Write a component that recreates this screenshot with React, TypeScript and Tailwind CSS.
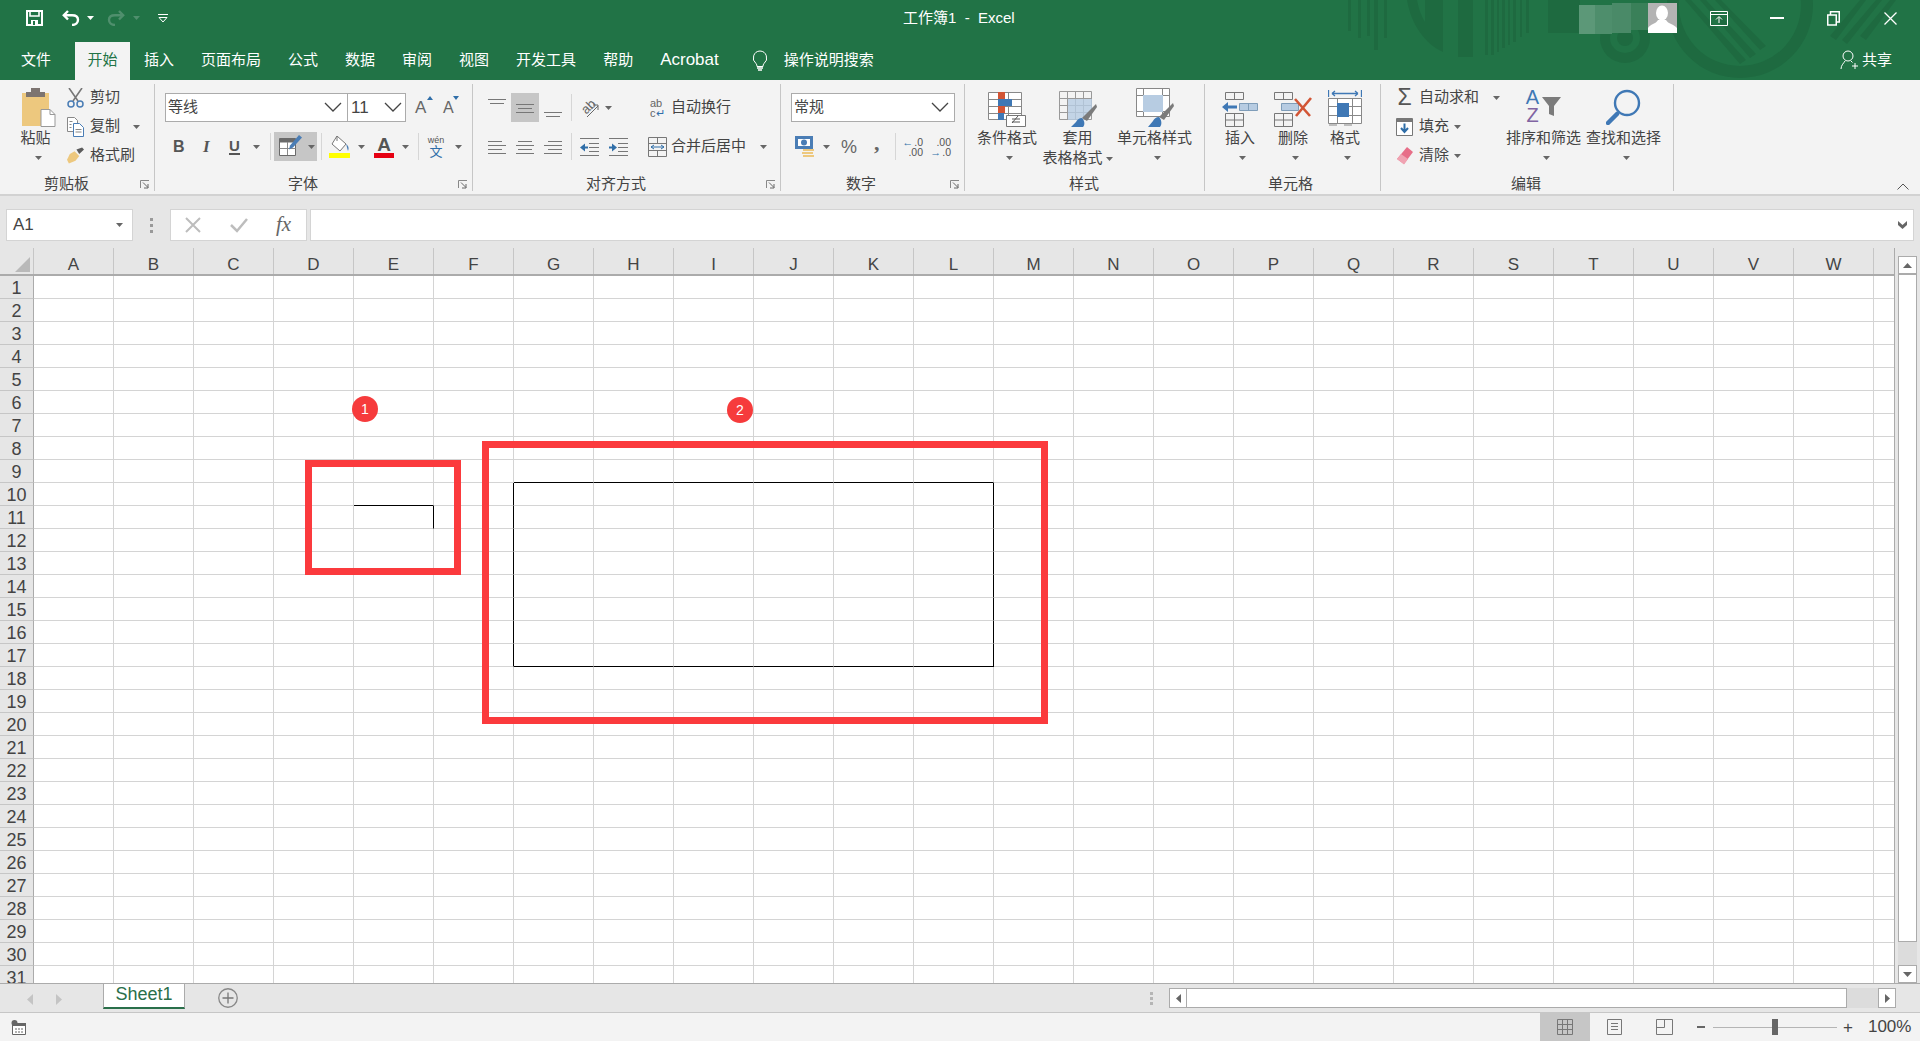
import type { ReactNode } from "react";

const columns = "ABCDEFGHIJKLMNOPQRSTUVW".split("");
const rows = Array.from({ length: 31 }, (_, i) => i + 1);

function Caret({ className = "" }: { className?: string }) {
  return (
    <svg width="7" height="4" viewBox="0 0 7 4" className={`shrink-0 ${className}`}>
      <path d="M0 0h7L3.5 4z" fill="#666" />
    </svg>
  );
}

function Chevron() {
  return (
    <svg width="18" height="11" viewBox="0 0 18 11" className="shrink-0">
      <path d="M1 1l8 8 8-8" fill="none" stroke="#444" strokeWidth="1.3" />
    </svg>
  );
}

function Launcher({ className = "" }: { className?: string }) {
  return (
    <svg width="10" height="9" viewBox="0 0 10 9" className={`shrink-0 ${className}`}>
      <path d="M.5 8V.5H9" fill="none" stroke="#888" />
      <path d="M3 2.5l5 5M8 4v4H4" fill="none" stroke="#666" />
    </svg>
  );
}

function Sep({ className = "" }: { className?: string }) {
  return <div className={`h-[27px] w-px shrink-0 bg-[#d6d6d6] ${className}`} />;
}

function Group({ className, label, labelClass, launcher, children }: {
  className: string;
  label: string;
  labelClass: string;
  launcher?: boolean;
  children: ReactNode;
}) {
  return (
    <div className={`mt-[4px] flex h-[107px] shrink-0 flex-col border-r border-[#c6c6c6] ${className}`}>
      <div className="h-[91px]">{children}</div>
      <div className="flex h-[16px] items-center pt-[2px] text-[15px] leading-[16px]">
        <span className={labelClass}>{label}</span>
        {launcher && <Launcher className="mr-[4px] ml-auto" />}
      </div>
    </div>
  );
}

function BigBtn({ className, icon, label, label2, noCaret }: {
  className: string;
  icon: ReactNode;
  label: string;
  label2?: string;
  noCaret?: boolean;
}) {
  return (
    <div className={`flex shrink-0 flex-col items-center ${className}`}>
      <div className="flex h-[43px] items-end">{icon}</div>
      <div className="mt-px h-[20px] text-[15px] leading-[20px] whitespace-nowrap">{label}</div>
      <div className="flex h-[20px] items-center justify-center text-[15px] leading-[20px] whitespace-nowrap">
        {label2 && <span>{label2}</span>}
        {!noCaret && <Caret className={label2 ? "mt-[2px] ml-[3px]" : "ml-[5px]"} />}
      </div>
    </div>
  );
}

function SmallRow({ icon, label, caretClass }: { icon: ReactNode; label: string; caretClass?: string }) {
  return (
    <div className="flex h-[29px] items-center text-[15px]">
      <div className="flex w-[17px] shrink-0 justify-center">{icon}</div>
      <span className="ml-[6px] whitespace-nowrap">{label}</span>
      {caretClass && <Caret className={caretClass} />}
    </div>
  );
}

function AlignIcon({ lines }: { lines: [number, number, number][] }) {
  return (
    <svg width="18" height="16" viewBox="0 0 18 16" className="shrink-0">
      {lines.map(([a, b, y]) => (
        <path key={y} d={`M${a} ${y}.5H${b}`} stroke="#777" />
      ))}
    </svg>
  );
}

function SaveIcon() {
  return (
    <svg width="17" height="16" viewBox="0 0 17 16">
      <path d="M1 1h15v14H1z" fill="none" stroke="#fff" strokeWidth="2" />
      <path d="M4 1v5h9V1" fill="none" stroke="#fff" strokeWidth="1.6" />
      <path d="M5 10h7v5H5z" fill="#fff" />
      <path d="M7 11h2v4H7z" fill="#217346" />
    </svg>
  );
}

function ArrowBack({ stroke, flip }: { stroke: string; flip?: boolean }) {
  return (
    <svg width="18" height="16" viewBox="0 0 18 16" className={flip ? "-scale-x-100" : ""}>
      <path d="M6 1L1.8 5.2 6 9.5" fill="none" stroke={stroke} strokeWidth="2.4" />
      <path d="M2 5.2h8c4 0 6 2 6 4.6S14 15 10 15" fill="none" stroke={stroke} strokeWidth="2.4" />
    </svg>
  );
}

function PasteIcon() {
  return (
    <svg width="35" height="39" viewBox="0 0 35 39">
      <path d="M1 5h27v33H1z" fill="#edc87e" />
      <path d="M5 4h5V0h9v4h5v5H5z" fill="#7c7470" />
      <path d="M20 21.5h9l5 5v12H20z" fill="#fff" stroke="#999" />
      <path d="M29 21.5v5h5" fill="none" stroke="#999" />
    </svg>
  );
}

function ScissorsIcon() {
  return (
    <svg width="17" height="20" viewBox="0 0 17 20">
      <path d="M2 0l9 13M15 0L6 13" stroke="#777" strokeWidth="1.6" fill="none" />
      <circle cx="4" cy="16" r="3" fill="none" stroke="#4a7db5" strokeWidth="1.5" />
      <circle cx="13" cy="16" r="3" fill="none" stroke="#4a7db5" strokeWidth="1.5" />
    </svg>
  );
}

function CopyIcon() {
  return (
    <svg width="17" height="20" viewBox="0 0 17 20">
      <path d="M.5.5h7l3 3v11H.5z" fill="#fff" stroke="#888" />
      <path d="M6.5 6.5h6l4 4v9h-10z" fill="#fff" stroke="#4a7db5" />
      <path d="M2.5 4.5h3M2.5 7.5h2M2.5 10.5h2M8.500 12.5h6M8.500 15h6" stroke="#888" />
    </svg>
  );
}

function BrushIcon() {
  return (
    <svg width="18" height="18" viewBox="0 0 18 18">
      <path d="M10 2l6-2 2 2-5 5z" fill="#5b5b5b" />
      <path d="M8 4l5 5-4 5-7 3-2-4 3-6z" fill="#edc87e" />
    </svg>
  );
}

function BorderIcon() {
  return (
    <svg width="23" height="24" viewBox="0 0 23 24">
      <path d="M.5 3.5h16v17H.5z" fill="#fff" stroke="#6a6a6a" />
      <path d="M.5 3.5h16v4H.5z" fill="#6a6a6a" />
      <path d="M.5 13.5h16M8.500 7v13" stroke="#888" />
      <path d="M20 0l3 2.500-9 10-4 2 1-4z" fill="#4a7db5" />
    </svg>
  );
}

function FillIcon() {
  return (
    <div className="flex flex-col items-center">
      <svg width="21" height="17" viewBox="0 0 21 17">
        <path d="M8 0l9 8-6 7-8-7z" fill="#fff" stroke="#777" />
        <path d="M8 0v5" stroke="#777" />
        <path d="M17 8c3 2 3 5 2 7-1-2-1-5-2-7z" fill="#4a7db5" />
      </svg>
      <div className="h-[5px] w-[21px] bg-[#ffff00]" />
    </div>
  );
}

function CurrencyIcon() {
  return (
    <svg width="20" height="22" viewBox="0 0 20 22">
      <path d="M0 0h18v13H0z" fill="#4a7db5" />
      <path d="M3 3h12v7H3z" fill="#fff" />
      <circle cx="9" cy="6.500" r="3" fill="#4a7db5" />
      <path d="M8 13h11v2H8zM7 16h11v2H7zM8 19h11v2H8z" fill="#edc87e" />
    </svg>
  );
}

function DecimalIcon({ up }: { up?: boolean }) {
  return (
    <div className="flex w-[17px] flex-col text-[10.5px] leading-[10px] text-[#555]">
      <div className="flex items-center justify-end">
        {up && <span className="mr-px text-[11px] text-[#2f6ea8]">←</span>}
        <span>{up ? ".0" : ".00"}</span>
      </div>
      <div className="flex items-center justify-end">
        {!up && <span className="mr-px text-[11px] text-[#2f6ea8]">→</span>}
        <span>{up ? ".00" : ".0"}</span>
      </div>
    </div>
  );
}

function IndentIcon({ dir }: { dir: "in" | "out" }) {
  return (
    <svg width="19" height="18" viewBox="0 0 19 18">
      <path d="M0 .5h19M9 5.500h10M9 9.500h10M9 13.500h10M0 17.500h19" stroke="#777" />
      <path d={dir === "out" ? "M0 9.500l5-4v3h3v2H5v3z" : "M8 9.500l-5-4v3H0v2h3v3z"} fill="#2f6ea8" />
    </svg>
  );
}

function MergeIcon() {
  return (
    <svg width="19" height="20" viewBox="0 0 19 20">
      <path d="M.5.5h18v19H.5zM.5 6.500h18M.5 13.500h18M9.500.5v6M9.500 13.500v6" fill="none" stroke="#777" />
      <path d="M3 10h13M3 10l3-2M3 10l3 2M16 10l-3-2M16 10l-3 2" stroke="#2f6ea8" fill="none" />
    </svg>
  );
}

function CondFormatIcon() {
  return (
    <svg width="38" height="35" viewBox="0 0 38 35">
      <path d="M.5.5h33v27H.5zM.5 7.500h33M.5 14.500h33M.5 21.500h33M10.500.5v27M20.500.5v27" fill="#fff" stroke="#888" />
      <path d="M10 0h7v7h-7zM10 14h7v7h-7z" fill="#d25535" />
      <path d="M10 7h14v7H10zM10 21h6v7h-6z" fill="#3f78b5" />
      <path d="M18.500 23.500h19v11h-19z" fill="#fff" stroke="#777" />
      <path d="M24 31l6-7M24 27h8M24 30h8" stroke="#555" fill="none" />
    </svg>
  );
}

function TableFormatIcon() {
  return (
    <svg width="38" height="36" viewBox="0 0 38 36">
      <path d="M.5.5h32v28H.5zM.5 7.500h32M.5 14.500h32M.5 21.500h32M8.500.5v28M16.500.5v28M24.500.5v28" fill="none" stroke="#999" />
      <path d="M9 8h24v15l-8 6H9z" fill="#b7cce2" opacity=".8" />
      <path d="M37 13l1 3-10 14-5-3z" fill="#7b7b7b" />
      <path d="M23 27c-3 0-5 2-6 4l-5 5h12c2-2 2-6-1-9z" fill="#3f78b5" />
    </svg>
  );
}

function CellStyleIcon() {
  return (
    <svg width="38" height="39" viewBox="0 0 38 39">
      <path d="M.5.5h33v28H.5zM.5 7.500h33M.5 23.500h33M7.500.5v28M26.500.5v28" fill="#fff" stroke="#888" />
      <path d="M7 7h20v17H7z" fill="#b7cce2" />
      <path d="M37 15l1 3-10 14-5-3z" fill="#7b7b7b" />
      <path d="M23 29c-3 0-5 2-6 4l-5 6h12c2-2 2-7-1-10z" fill="#3f78b5" />
    </svg>
  );
}

function InsertCellIcon() {
  return (
    <svg width="36" height="35" viewBox="0 0 36 35">
      <path d="M3.500.5h18v7h-18zM12.500.5v7M3.500 21.500h18v13h-18zM3.500 28h18M12.500 21.500v13" fill="none" stroke="#777" />
      <path d="M17.500 11.500h18v7h-18z" fill="#b7cce2" stroke="#7f9db9" />
      <path d="M26.500 11.500v7" stroke="#7f9db9" />
      <path d="M0 15l6-5v3.500h9v3H6V20z" fill="#3f78b5" />
    </svg>
  );
}

function DeleteCellIcon() {
  return (
    <svg width="39" height="35" viewBox="0 0 39 35">
      <path d="M.5.5h18v7H.5zM9.500.5v7M.5 21.500h18v13H.5zM.5 28h18M9.500 21.500v13" fill="none" stroke="#777" />
      <path d="M7.500 11.500h17v7h-17z" fill="#b7cce2" stroke="#7f9db9" />
      <path d="M21 7l15 17M37 6L22 24" stroke="#d25535" strokeWidth="2.6" fill="none" />
    </svg>
  );
}

function FormatCellIcon() {
  return (
    <svg width="34" height="38" viewBox="0 0 34 38">
      <path d="M.5 1v7M33.500 1v7M4 4.500h26M4 4.500l3-2.500M4 4.500L7 7M30 4.500L27 2M30 4.500L27 7" fill="none" stroke="#3f78b5" strokeWidth="1.3" />
      <path d="M.5 9.500h33v25H.5zM.5 17.500h33M.5 26.500h33M9.500 9.500v25M24.500 9.500v25" fill="#fff" stroke="#888" />
      <path d="M9 14h12v14H9z" fill="#3f78b5" />
      <path d="M1 36h8M16 36h8" stroke="#888" />
    </svg>
  );
}

function FillDownIcon() {
  return (
    <svg width="17" height="18" viewBox="0 0 17 18">
      <path d="M.5.5h16v17H.5z" fill="#fff" stroke="#777" />
      <path d="M.5 1h16v3H.5z" fill="#777" />
      <path d="M8.500 5.500v8M5 10l3.500 4L12 10" fill="none" stroke="#2f6ea8" strokeWidth="2" />
    </svg>
  );
}

function EraserIcon() {
  return (
    <svg width="17" height="18" viewBox="0 0 17 18">
      <path d="M11 0l6 5-9 12-7-5z" fill="#e76e88" />
      <path d="M1 12l4-5 7 5-4 5.500z" fill="#f0a3b2" />
    </svg>
  );
}

function SortIcon() {
  return (
    <div className="flex h-[36px] w-[35px] items-start">
      <div className="flex w-[13px] flex-col items-center text-[20px] leading-[18px]">
        <span className="text-[#3f78b5]">A</span>
        <span className="text-[#8064a2]">Z</span>
      </div>
      <svg width="19" height="20" viewBox="0 0 19 20" className="mt-[9px] ml-[3px]">
        <path d="M0 0h19l-7 9v10l-5-2V9z" fill="#7b7b7b" />
      </svg>
    </div>
  );
}

function FindIcon() {
  return (
    <svg width="35" height="36" viewBox="0 0 35 36">
      <circle cx="21" cy="14" r="12" fill="none" stroke="#3f78b5" strokeWidth="2.4" />
      <path d="M11 25L2 34" stroke="#3f78b5" strokeWidth="4.500" strokeLinecap="round" />
    </svg>
  );
}

function TitleArt() {
  return (
    <svg viewBox="0 0 580 80" width="580" height="80" className="absolute top-0 right-0">
      <g fill="#1e6a40">
        <path d="M8 0h3v31H8zM18 0h3v38h-3zM27 0h3v36h-3zM34 0h4v50h-4zM44 0h3v38h-3z" />
        <path d="M67 0h10c2 10 4 15 8 22V0h18v52c-18-8-32-28-36-52z" />
        <path d="M118 0h15v57h-15zM145 0h3v55h-3zM151 0h3v55h-3zM157 0h2v52h-2zM162 0h3v48h-3zM168 0h2v45h-2zM173 0h3v42h-3zM180 0h2v37h-2zM186 0h3v33h-3z" />
        <path d="M208 0h32v33h-32z" />
        <path fillRule="evenodd" d="M285 13a25 25 0 1 1 0 50 25 25 0 0 1 0-50zm0 10a15 15 0 1 0 0 30 15 15 0 0 0 0-30z" />
        <circle cx="285" cy="38" r="8" />
        <path fillRule="evenodd" d="M400 -68a73 73 0 1 1 0 146 73 73 0 0 1 0-146zm0 12a61 61 0 1 0 0 122 61 61 0 0 0 0-122z" />
        <path d="M345 0h6l55 60-6 4zM360 0h6l50 54-6 4zM375 0h6l45 46-6 4z" />
        <path d="M490 36l30-36h6l-30 40zM502 40l34-40h6l-35 44zM520 36l30-36h6l-30 40z" />
      </g>
    </svg>
  );
}

function cellClass(r: number, c: number) {
  const inRect = c >= 6 && c <= 11;
  const bottom = ((r === 9 || r === 17) && inRect) || (r === 10 && c === 4);
  const right = ((c === 5 || c === 11) && r >= 10 && r <= 17) || (r === 11 && c === 4);
  return `${bottom ? "border-b-black" : "border-b-[#d4d4d4]"} ${right ? "border-r-black" : "border-r-[#d4d4d4]"}`;
}

export default function App() {
  return (
    <div className="relative flex h-[1041px] w-[1920px] flex-col overflow-hidden bg-[#e6e6e6] font-['Liberation_Sans','Noto_Sans_CJK_SC',sans-serif] text-[#444]">
      {/* Title bar + tabs */}
      <header className="relative h-[80px] shrink-0 overflow-hidden bg-[#217346] text-white">
        <TitleArt />
        <div className="relative flex h-[42px] items-center pb-[6px]">
          <div className="flex w-[903px] items-center pl-[26px]">
            <SaveIcon />
            <div className="ml-[19px]"><ArrowBack stroke="#fff" /></div>
            <svg width="7" height="4" className="ml-[7px]"><path d="M0 0h7L3.500 4z" fill="#fff" /></svg>
            <div className="ml-[13px]"><ArrowBack stroke="#4f8f6d" flip /></div>
            <svg width="7" height="4" className="ml-[8px]"><path d="M0 0h7L3.500 4z" fill="#4f8f6d" /></svg>
            <svg width="10" height="9" viewBox="0 0 10 9" className="ml-[18px]">
              <path d="M0 .5h10M1 3.500h8L5 8z" fill="none" stroke="#fff" />
            </svg>
          </div>
          <span className="text-[15px] whitespace-nowrap">工作簿1&nbsp; -&nbsp; Excel</span>
          <div className="ml-auto flex items-center">
            <svg width="70" height="31" viewBox="0 0 70 31" className="mr-[-1px]">
              <path d="M0 2h16v29H0z" fill="#5c9878" />
              <path d="M16 2h17v29H16z" fill="#4e8e6c" />
              <path d="M33 0h19v30H33z" fill="#4a8a68" />
              <path d="M52 0h18v27H52z" fill="#3a8059" />
            </svg>
            <svg width="29" height="30" viewBox="0 0 29 30">
              <path d="M0 0h29v30H0z" fill="#b3b3b3" />
              <ellipse cx="14" cy="10" rx="6" ry="7.500" fill="#fff" />
              <path d="M0 30v-5c2-4 8-4 10-8h8c2 4 8 4 11 8v5z" fill="#fff" />
            </svg>
            <svg width="18" height="15" viewBox="0 0 18 15" className="ml-[33px]">
              <path d="M.5.5h17v14H.5zM.5 3.500h17" fill="none" stroke="#fff" />
              <path d="M9 12V6M6 8.500L9 5.500l3 3" fill="none" stroke="#fff" />
            </svg>
            <div className="ml-[42px] h-[2px] w-[14px] bg-white" />
            <svg width="13" height="15" viewBox="0 0 13 15" className="ml-[43px]">
              <path d="M.75 4h8.500v10H.750zM3.500 4V.75h8.750V11H9.250" fill="none" stroke="#fff" strokeWidth="1.500" />
            </svg>
            <svg width="13" height="13" viewBox="0 0 13 13" className="mr-[23px] ml-[44px]">
              <path d="M.5.5l12 12M12.500.5l-12 12" stroke="#fff" strokeWidth="1.300" />
            </svg>
          </div>
        </div>
        <nav className="relative flex h-[38px] items-start gap-[27px] pt-[8px] pl-[21px] text-[15px] leading-[20px] whitespace-nowrap">
          <span>文件</span>
          <span className="mt-[-8px] ml-[-3px] flex h-[38px] w-[55px] justify-center bg-[#f3f3f3] pt-[8px] text-[#217346]">开始</span>
          <span className="ml-[-13px]">插入</span>
          <span>页面布局</span>
          <span>公式</span>
          <span>数据</span>
          <span>审阅</span>
          <span>视图</span>
          <span>开发工具</span>
          <span>帮助</span>
          <span className="text-[17px]">Acrobat</span>
          <svg width="16" height="21" viewBox="0 0 16 21" className="ml-[6px]">
            <path d="M8 1a7 7 0 0 0-4 12.500c.8.8 1 2 1 3h6c0-1 .2-2.200 1-3A7 7 0 0 0 8 1z" fill="none" stroke="#fff" />
            <path d="M5 18h6M6 20h4" stroke="#fff" strokeWidth="1.300" />
          </svg>
          <span className="ml-[-11px]">操作说明搜索</span>
          <div className="mr-[28px] ml-auto flex items-center">
            <svg width="19" height="20" viewBox="0 0 19 20">
              <circle cx="8" cy="6" r="5" fill="none" stroke="#fff" />
              <path d="M1 19c0-4 3-6 4-8M11 11l1.500 1.500M15 13v6M12 16h6" fill="none" stroke="#fff" />
            </svg>
            <span className="ml-[3px]">共享</span>
          </div>
        </nav>
      </header>

      {/* Ribbon */}
      <section className="flex h-[116px] shrink-0 border-b-2 border-[#d2d2d2] bg-[#f3f3f3]">
        <Group className="w-[155px]" label="剪贴板" labelClass="ml-[44px]" launcher>
          <div className="flex">
            <BigBtn className="ml-[7px] w-[57px]" icon={<div className="ml-[5px]"><PasteIcon /></div>} label="粘贴" />
            <div className="mt-[-1px] ml-[3px] flex flex-col">
              <SmallRow icon={<ScissorsIcon />} label="剪切" />
              <SmallRow icon={<CopyIcon />} label="复制" caretClass="ml-[13px]" />
              <SmallRow icon={<BrushIcon />} label="格式刷" />
            </div>
          </div>
        </Group>

        <Group className="w-[318px]" label="字体" labelClass="ml-[133px]" launcher>
          <div className="flex h-[29px] mt-[9px] items-center">
            <div className="ml-[10px] flex h-[29px] w-[183px] items-center justify-between border border-[#ababab] bg-white pr-[5px] pl-[2px] text-[15px]">
              <span>等线</span>
              <Chevron />
            </div>
            <div className="ml-[-1px] flex h-[29px] w-[59px] items-center justify-between border border-[#ababab] bg-white pr-[3px] pl-[3px] text-[17px]">
              <span>11</span>
              <Chevron />
            </div>
            <div className="relative ml-[9px] w-[15px] text-[17px] leading-none text-[#666]">
              A
              <svg width="6" height="4" className="absolute top-[-3px] right-[-3px]"><path d="M0 4h6L3 0z" fill="#2f6ea8" /></svg>
            </div>
            <div className="relative ml-[13px] w-[13px] text-[16px] leading-none text-[#666]">
              A
              <svg width="6" height="4" className="absolute top-[-4px] right-[-3px]"><path d="M0 0h6L3 4z" fill="#2f6ea8" /></svg>
            </div>
          </div>
          <div className="mt-[10px] flex h-[29px] items-center">
            <span className="ml-[18px] w-[10px] font-['Liberation_Sans'] text-[16px] font-bold text-[#555]">B</span>
            <span className="ml-[20px] w-[8px] font-['Liberation_Serif'] text-[17px] font-bold text-[#555] italic">I</span>
            <span className="ml-[18px] w-[11px] border-b-2 border-[#555] text-[15px] leading-[15px] font-bold text-[#555]">U</span>
            <Caret className="ml-[13px]" />
            <Sep className="ml-[10px]" />
            <div className="ml-[3px] flex h-[29px] w-[43px] items-center bg-[#c6c6c6] pl-[5px]">
              <BorderIcon />
              <Caret className="ml-[6px]" />
            </div>
            <Sep className="ml-[4px]" />
            <div className="ml-[7px]"><FillIcon /></div>
            <Caret className="ml-[8px]" />
            <div className="ml-[9px] flex w-[20px] flex-col items-center">
              <span className="text-[19px] leading-[17px] font-bold text-[#555]">A</span>
              <div className="h-[5px] w-[20px] bg-[#e60012]" />
            </div>
            <Caret className="ml-[8px]" />
            <Sep className="ml-[9px]" />
            <div className="ml-[8px] flex w-[18px] flex-col items-center leading-none">
              <span className="text-[9px] text-[#555]">wén</span>
              <span className="text-[13px] text-[#2f6ea8]">文</span>
            </div>
            <Caret className="ml-[10px]" />
          </div>
        </Group>

        <Group className="w-[308px]" label="对齐方式" labelClass="ml-[113px]" launcher>
          <div className="mt-[9px] flex h-[29px] items-center">
            <div className="ml-[10px] flex h-[29px] w-[28px] items-center justify-center pb-[8px]">
              <AlignIcon lines={[[0, 18, 3], [2, 16, 7]]} />
            </div>
            <div className="flex h-[29px] w-[28px] items-center justify-center bg-[#c6c6c6]">
              <AlignIcon lines={[[0, 18, 4], [2, 16, 8], [0, 18, 12]]} />
            </div>
            <div className="flex h-[29px] w-[28px] items-center justify-center pt-[8px]">
              <AlignIcon lines={[[0, 18, 8], [2, 16, 12]]} />
            </div>
            <Sep className="ml-[4px]" />
            <div className="relative ml-[8px] h-[20px] w-[19px]">
              <span className="absolute top-[2px] left-[1px] -rotate-45 text-[13px] leading-none text-[#666]">ab</span>
              <svg width="19" height="20" viewBox="0 0 19 20" className="absolute top-0 left-0">
                <path d="M7 19L18 8M13 7h5v5" fill="none" stroke="#666" />
              </svg>
            </div>
            <Caret className="ml-[6px]" />
            <div className="ml-[38px] flex w-[16px] flex-col text-[11px] leading-[10px] text-[#666]">
              <span>ab</span>
              <span>c<span className="text-[#2f6ea8]">↵</span></span>
            </div>
            <span className="ml-[5px] text-[15px]">自动换行</span>
          </div>
          <div className="mt-[10px] flex h-[29px] items-center">
            <div className="ml-[10px] flex w-[28px] justify-center">
              <AlignIcon lines={[[0, 14, 2], [0, 18, 6], [0, 14, 10], [0, 18, 14]]} />
            </div>
            <div className="flex w-[28px] justify-center">
              <AlignIcon lines={[[2, 16, 2], [0, 18, 6], [2, 16, 10], [0, 18, 14]]} />
            </div>
            <div className="flex w-[28px] justify-center">
              <AlignIcon lines={[[4, 18, 2], [0, 18, 6], [4, 18, 10], [0, 18, 14]]} />
            </div>
            <Sep className="ml-[4px]" />
            <div className="ml-[8px]"><IndentIcon dir="out" /></div>
            <div className="ml-[10px]"><IndentIcon dir="in" /></div>
            <div className="ml-[20px]"><MergeIcon /></div>
            <span className="ml-[4px] text-[15px] whitespace-nowrap">合并后居中</span>
            <Caret className="ml-[14px]" />
          </div>
        </Group>

        <Group className="w-[184px]" label="数字" labelClass="ml-[65px]" launcher>
          <div className="mt-[9px] ml-[10px] flex h-[29px] w-[164px] items-center justify-between border border-[#ababab] bg-white pr-[5px] pl-[2px] text-[15px]">
            <span>常规</span>
            <Chevron />
          </div>
          <div className="mt-[10px] flex h-[29px] items-center text-[#666]">
            <div className="ml-[14px]"><CurrencyIcon /></div>
            <Caret className="ml-[8px]" />
            <span className="ml-[11px] w-[16px] text-[18px] leading-none">%</span>
            <span className="mt-[-8px] ml-[17px] w-[6px] font-['Liberation_Serif'] text-[22px] leading-none font-bold">,</span>
            <Sep className="ml-[15px]" />
            <div className="ml-[10px]"><DecimalIcon up /></div>
            <div className="ml-[11px]"><DecimalIcon /></div>
          </div>
        </Group>

        <Group className="w-[240px]" label="样式" labelClass="ml-[104px]">
          <div className="flex">
            <BigBtn className="ml-[12px] w-[60px]" icon={<CondFormatIcon />} label="条件格式" />
            <BigBtn className="ml-[1px] w-[79px]" icon={<TableFormatIcon />} label="套用" label2="表格格式" />
            <BigBtn className="w-[75px]" icon={<CellStyleIcon />} label="单元格样式" />
          </div>
        </Group>

        <Group className="w-[176px]" label="单元格" labelClass="ml-[63px]">
          <div className="flex">
            <BigBtn className="ml-[5px] w-[60px]" icon={<InsertCellIcon />} label="插入" />
            <BigBtn className="w-[46px]" icon={<DeleteCellIcon />} label="删除" />
            <BigBtn className="w-[58px]" icon={<FormatCellIcon />} label="格式" />
          </div>
        </Group>

        <Group className="w-[293px]" label="编辑" labelClass="ml-[130px]">
          <div className="flex">
            <div className="mt-[-1px] ml-[15px] flex w-[110px] shrink-0 flex-col">
              <SmallRow icon={<span className="text-[23px] leading-none text-[#555]">Σ</span>} label="自动求和" caretClass="ml-[14px]" />
              <SmallRow icon={<FillDownIcon />} label="填充" caretClass="ml-[5px]" />
              <SmallRow icon={<EraserIcon />} label="清除" caretClass="ml-[5px]" />
            </div>
            <BigBtn className="w-[75px]" icon={<div className="mb-[3px]"><SortIcon /></div>} label="排序和筛选" />
            <BigBtn className="ml-[5px] w-[75px]" icon={<div className="mb-[2px]"><FindIcon /></div>} label="查找和选择" />
          </div>
        </Group>

        <div className="flex flex-1 items-end justify-end pr-[11px] pb-[4px]">
          <svg width="12" height="7" viewBox="0 0 12 7"><path d="M.5 6.500L6 1l5.500 5.500" fill="none" stroke="#555" /></svg>
        </div>
      </section>

      {/* Formula bar */}
      <div className="flex h-[52px] shrink-0 items-start pt-[13px]">
        <div className="ml-[6px] flex h-[32px] w-[127px] items-center justify-between border border-[#d4d4d4] bg-white pr-[9px] pl-[6px] text-[17px]">
          <span>A1</span>
          <Caret />
        </div>
        <div className="ml-[16px] flex h-[32px] w-[4px] flex-col items-center justify-center gap-[3px]">
          <div className="size-[3px] bg-[#999]" />
          <div className="size-[3px] bg-[#999]" />
          <div className="size-[3px] bg-[#999]" />
        </div>
        <div className="ml-[17px] flex h-[32px] w-[137px] items-center border border-[#d4d4d4] bg-white pl-[14px]">
          <svg width="16" height="16" viewBox="0 0 16 16"><path d="M1 1l14 14M15 1L1 15" stroke="#bdbdbd" strokeWidth="2" /></svg>
          <svg width="18" height="16" viewBox="0 0 18 16" className="ml-[29px]"><path d="M1 8l6 6L17 2" fill="none" stroke="#bdbdbd" strokeWidth="2.500" /></svg>
          <span className="ml-[28px] font-['Liberation_Serif'] text-[21px] text-[#666] italic">fx</span>
        </div>
        <div className="ml-[3px] flex h-[32px] w-[1604px] items-center justify-end border border-[#d4d4d4] bg-white pr-[6px]">
          <svg width="9" height="8" viewBox="0 0 9 8"><path d="M0 0l4.500 4L9 0v4L4.500 8 0 4z" fill="#666" /></svg>
        </div>
      </div>

      {/* Sheet */}
      <main className="flex h-[735px] shrink-0">
        <div className="flex w-[1895px] shrink-0 flex-col overflow-hidden border-r border-[#ababab]">
          <div className="flex h-[28px] shrink-0 border-b-2 border-[#ababab] text-[17px] leading-[18px] text-[#444]">
            <div className="flex w-[34px] shrink-0 items-end justify-end border-r border-[#c6c6c6] pr-[3px] pb-[2px]">
              <svg width="15" height="15" viewBox="0 0 15 15"><path d="M15 0v15H0z" fill="#b9b9b9" /></svg>
            </div>
            {columns.map((c) => (
              <div key={c} className="w-[80px] shrink-0 border-r border-[#c6c6c6] pt-[8px] text-center">{c}</div>
            ))}
          </div>
          <div className="flex-1 overflow-hidden bg-white">
            {rows.map((r) => (
              <div key={r} className="flex h-[23px]">
                <div className="w-[34px] shrink-0 border-r border-b border-r-[#ababab] border-b-[#c6c6c6] bg-[#e6e6e6] text-center text-[18px] leading-[24px]">{r}</div>
                {columns.map((_, c) => (
                  <div key={c} className={`w-[80px] shrink-0 border-r border-b ${cellClass(r, c)}`} />
                ))}
                <div className="flex-1 border-b border-b-[#d4d4d4]" />
              </div>
            ))}
          </div>
        </div>
        <div className="ml-[3px] flex w-[19px] shrink-0 flex-col pt-[8px]">
          <div className="flex h-[18px] shrink-0 items-center justify-center border border-[#ababab] bg-white">
            <svg width="9" height="5"><path d="M0 5h9L4.500 0z" fill="#666" /></svg>
          </div>
          <div className="flex-1 bg-[#dcdcdc] pb-[23px]">
            <div className="h-full border border-[#ababab] bg-white" />
          </div>
          <div className="flex h-[18px] shrink-0 items-center justify-center border border-[#ababab] bg-white">
            <svg width="9" height="5"><path d="M0 0h9L4.500 5z" fill="#666" /></svg>
          </div>
        </div>
      </main>

      {/* Sheet tabs */}
      <div className="flex h-[29px] shrink-0 items-start border-t border-[#ababab]">
        <svg width="6" height="11" viewBox="0 0 6 11" className="mt-[10px] ml-[27px]"><path d="M6 0v11L0 5.500z" fill="#c4c4c4" /></svg>
        <svg width="6" height="11" viewBox="0 0 6 11" className="mt-[10px] ml-[23px]"><path d="M0 0v11l6-5.500z" fill="#c4c4c4" /></svg>
        <div className="ml-[41px] flex h-[25px] w-[82px] items-center justify-center border-x border-b-2 border-x-[#ababab] border-b-[#2a6f4a] bg-white pb-[3px] text-[18px] text-[#2a6f4a]">
          Sheet1
        </div>
        <svg width="20" height="20" viewBox="0 0 20 20" className="mt-[4px] ml-[33px]">
          <circle cx="10" cy="10" r="9.250" fill="none" stroke="#888" strokeWidth="1.300" />
          <path d="M10 4.500v11M4.500 10h11" stroke="#777" strokeWidth="1.300" />
        </svg>
        <div className="mt-[8px] ml-[912px] flex h-[13px] w-[3px] flex-col justify-between">
          <div className="h-[3px] bg-[#b5b5b5]" />
          <div className="h-[3px] bg-[#b5b5b5]" />
          <div className="h-[3px] bg-[#b5b5b5]" />
        </div>
        <div className="mt-[4px] ml-[16px] flex h-[20px] w-[727px] bg-[#dcdcdc]">
          <div className="flex w-[18px] items-center justify-center border border-[#ababab] bg-white">
            <svg width="5" height="9"><path d="M5 0v9L0 4.500z" fill="#666" /></svg>
          </div>
          <div className="w-[660px] border-y border-r border-[#ababab] bg-white" />
          <div className="flex-1" />
          <div className="flex w-[18px] items-center justify-center border border-[#ababab] bg-white">
            <svg width="5" height="9"><path d="M0 0v9l5-4.500z" fill="#666" /></svg>
          </div>
        </div>
      </div>

      {/* Status bar */}
      <footer className="flex h-[29px] shrink-0 items-center border-t border-[#c6c6c6] bg-[#f3f3f3]">
        <svg width="15" height="15" viewBox="0 0 15 15" className="ml-[11px]">
          <path d="M1.500 3.500h13v11h-13z" fill="#fff" stroke="#666" />
          <path d="M1 3h14v3H1z" fill="#666" />
          <circle cx="3.500" cy="3" r="3" fill="#666" />
          <path d="M4 9h2M7 9h2M10 9h2M4 12h2M7 12h2M10 12h2" stroke="#666" />
        </svg>
        <div className="ml-[1514px] flex h-[28px] w-[50px] items-center justify-center bg-[#c6c6c6]">
          <svg width="16" height="16" viewBox="0 0 16 16">
            <path d="M.5.5h15v15H.5zM.5 5.500h15M.5 10.500h15M5.500.5v15M10.500.5v15" fill="none" stroke="#777" />
          </svg>
        </div>
        <svg width="17" height="16" viewBox="0 0 17 16" className="ml-[16px]">
          <path d="M1.500.5h14v15h-14z" fill="none" stroke="#777" />
          <path d="M5 4.500h7M5 7.500h7M5 10.500h7" stroke="#777" />
        </svg>
        <svg width="17" height="16" viewBox="0 0 17 16" className="ml-[33px]">
          <path d="M.5.5h16v15H.5zM.5 8.500h8M8.500.5v8" fill="none" stroke="#777" />
        </svg>
        <div className="ml-[24px] h-[2px] w-[8px] bg-[#666]" />
        <div className="ml-[8px] flex h-[16px] w-[124px] items-center">
          <div className="h-px w-[59px] bg-[#b5b5b5]" />
          <div className="h-[16px] w-[6px] bg-[#666]" />
          <div className="h-px flex-1 bg-[#b5b5b5]" />
        </div>
        <span className="ml-[6px] text-[17px] leading-none">+</span>
        <span className="ml-[15px] text-[17px]">100%</span>
      </footer>

      {/* Red annotations */}
      <div className="absolute top-[460px] left-[305px] h-[115px] w-[156px] border-[7px] border-[#fb3a3d]" />
      <div className="absolute top-[441px] left-[482px] h-[283px] w-[566px] border-[7px] border-[#fb3a3d]" />
      <div className="absolute top-[396px] left-[352px] flex size-[26px] items-center justify-center rounded-full bg-[#f63b3c] text-[14px] text-white">1</div>
      <div className="absolute top-[397px] left-[727px] flex size-[26px] items-center justify-center rounded-full bg-[#f63b3c] text-[14px] text-white">2</div>
    </div>
  );
}
